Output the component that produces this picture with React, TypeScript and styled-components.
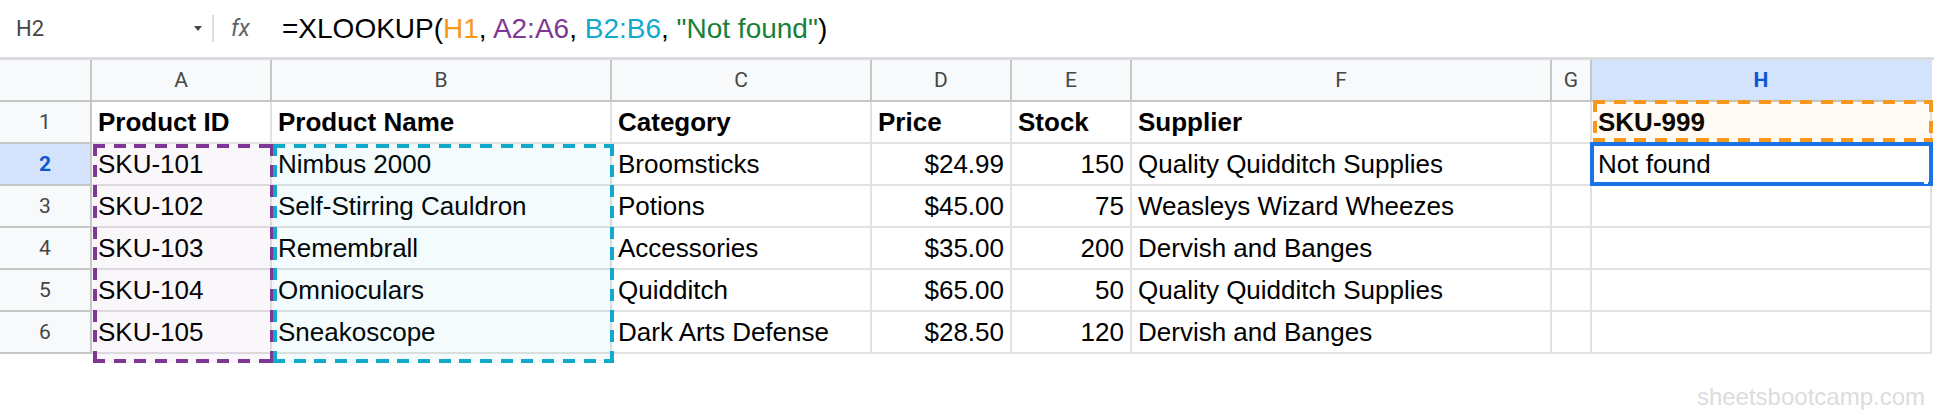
import { Fragment } from 'react';
import styled, { createGlobalStyle, css } from 'styled-components';

const GlobalStyle = createGlobalStyle`
  html, body {
    margin: 0;
    padding: 0;
    background: #fff;
  }

  body {
    font-family: 'Liberation Sans', Arial, sans-serif;
  }
`;

const COLUMN_WIDTHS = [180, 340, 260, 140, 120, 420, 40, 340];
const COLUMN_LETTERS = ['A', 'B', 'C', 'D', 'E', 'F', 'G', 'H'];
const ACTIVE_COLUMN = 'H';
const ACTIVE_ROW = 2;

type Row = { cells: string[]; bold?: boolean };

const rows: Row[] = [
  { cells: ['Product ID', 'Product Name', 'Category', 'Price', 'Stock', 'Supplier', '', 'SKU-999'], bold: true },
  { cells: ['SKU-101', 'Nimbus 2000', 'Broomsticks', '$24.99', '150', 'Quality Quidditch Supplies', '', 'Not found'] },
  { cells: ['SKU-102', 'Self-Stirring Cauldron', 'Potions', '$45.00', '75', 'Weasleys Wizard Wheezes', '', ''] },
  { cells: ['SKU-103', 'Remembrall', 'Accessories', '$35.00', '200', 'Dervish and Banges', '', ''] },
  { cells: ['SKU-104', 'Omnioculars', 'Quidditch', '$65.00', '50', 'Quality Quidditch Supplies', '', ''] },
  { cells: ['SKU-105', 'Sneakoscope', 'Dark Arts Defense', '$28.50', '120', 'Dervish and Banges', '', ''] },
];

const Page = styled.div`
  width: 1934px;
  background: #fff;
`;

/* formula bar */

const FormulaBar = styled.div`
  display: flex;
  align-items: center;
  height: 57px;
  border-bottom: 3px solid #dadce0;
`;

const NameBox = styled.div`
  display: flex;
  align-items: center;
  justify-content: space-between;
  box-sizing: border-box;
  width: 212px;
  padding: 0 10px 0 16px;
  font-family: Roboto, 'Liberation Sans', sans-serif;
  font-size: 22px;
  color: #444746;
`;

const Caret = styled.span`
  width: 0;
  height: 0;
  border-left: 4px solid transparent;
  border-right: 4px solid transparent;
  border-top: 5px solid #444746;
`;

const Divider = styled.span`
  width: 2px;
  height: 27px;
  background: #dadce0;
`;

const FxLabel = styled.span`
  box-sizing: border-box;
  width: 68px;
  padding-left: 17px;
  font-family: Roboto, 'Liberation Sans', sans-serif;
  font-style: italic;
  font-size: 23px;
  color: #5f6368;
`;

const Formula = styled.div`
  font-size: 28px;
  color: #000;
  white-space: pre;
`;

const Ref = styled.span<{ $color: string }>`
  color: ${({ $color }) => $color};
`;

/* grid */

const Sheet = styled.div`
  position: relative;
  display: grid;
  grid-template-columns: 92px ${COLUMN_WIDTHS.map((w) => `${w}px`).join(' ')};
  grid-auto-rows: 42px;
  width: 1932px;
`;

const headerBase = css`
  display: flex;
  align-items: center;
  justify-content: center;
  box-sizing: border-box;
  border-right: 2px solid #c4c7c5;
  border-bottom: 2px solid #c4c7c5;
  font-family: Roboto, 'Liberation Sans', sans-serif;
  font-size: 21px;
`;

const Corner = styled.div`
  ${headerBase};
  background: #f8f9fa;
`;

const ColumnHeader = styled.div<{ $active?: boolean }>`
  ${headerBase};
  border-right-color: ${({ $active }) => ($active ? '#d3e3fd' : '#c4c7c5')};
  background: ${({ $active }) => ($active ? '#d3e3fd' : '#f8f9fa')};
  color: ${({ $active }) => ($active ? '#0b57d0' : '#444746')};
  font-weight: ${({ $active }) => ($active ? 700 : 400)};
`;

const RowHeader = styled.div<{ $active?: boolean }>`
  ${headerBase};
  background: ${({ $active }) => ($active ? '#d3e3fd' : '#f8f9fa')};
  color: ${({ $active }) => ($active ? '#0b57d0' : '#444746')};
  font-weight: ${({ $active }) => ($active ? 700 : 400)};
`;

const Cell = styled.div<{ $right?: boolean; $bold?: boolean }>`
  display: flex;
  align-items: flex-end;
  justify-content: ${({ $right }) => ($right ? 'flex-end' : 'flex-start')};
  box-sizing: border-box;
  padding: 0 6px 4px;
  border-right: 2px solid #e1e1e1;
  border-bottom: 2px solid #e1e1e1;
  font-size: 26px;
  font-weight: ${({ $bold }) => ($bold ? 700 : 400)};
  color: #000;
  white-space: nowrap;
  overflow: hidden;
`;

/* range highlights drawn over the grid */

const dashes = (color: string) => `
  repeating-linear-gradient(90deg, ${color} 0 12px, transparent 12px 20.7px) left top / 100% 4px no-repeat,
  repeating-linear-gradient(90deg, ${color} 0 12px, transparent 12px 20.7px) left bottom / 100% 4px no-repeat,
  repeating-linear-gradient(180deg, ${color} 0 12px, transparent 12px 20.7px) left top / 4px 100% no-repeat,
  repeating-linear-gradient(180deg, ${color} 0 12px, transparent 12px 20.7px) right top / 4px 100% no-repeat
`;

type Box = { $left: number; $top: number; $width: number; $height: number };

const boxPlacement = css<Box>`
  position: absolute;
  left: ${({ $left }) => $left}px;
  top: ${({ $top }) => $top}px;
  width: ${({ $width }) => $width}px;
  height: ${({ $height }) => $height}px;
  box-sizing: border-box;
  pointer-events: none;
`;

const RangeBox = styled.div<Box & { $color: string; $fill: string }>`
  ${boxPlacement};
  background: ${({ $color }) => dashes($color)};
  background-color: ${({ $fill }) => $fill};
`;

const Selection = styled.div<Box>`
  ${boxPlacement};
  border: 4px solid #1a73e8;
`;

const FillHandle = styled.span`
  position: absolute;
  right: 1px;
  bottom: -2px;
  width: 4px;
  height: 4px;
  background: #fff;
`;

const Watermark = styled.div`
  display: flex;
  justify-content: flex-end;
  margin-top: 29px;
  padding-right: 9px;
  font-size: 24px;
  color: #dcdcdc;
`;

const ORANGE = '#f7981d';
const PURPLE = '#7e3794';
const CYAN = '#11a9cc';
const GREEN = '#188038';

export default function App() {
  return (
    <Page>
      <GlobalStyle />

      <FormulaBar>
        <NameBox>
          <span>H2</span>
          <Caret />
        </NameBox>
        <Divider />
        <FxLabel>fx</FxLabel>
        <Formula>
          =XLOOKUP(<Ref $color={ORANGE}>H1</Ref>, <Ref $color={PURPLE}>A2:A6</Ref>,{' '}
          <Ref $color={CYAN}>B2:B6</Ref>, <Ref $color={GREEN}>"Not found"</Ref>)
        </Formula>
      </FormulaBar>

      <Sheet>
        <Corner />
        {COLUMN_LETTERS.map((letter) => (
          <ColumnHeader key={letter} $active={letter === ACTIVE_COLUMN}>
            {letter}
          </ColumnHeader>
        ))}

        {rows.map((row, r) => (
          <Fragment key={r}>
            <RowHeader $active={r + 1 === ACTIVE_ROW}>{r + 1}</RowHeader>
            {row.cells.map((value, c) => (
              <Cell key={c} $bold={row.bold} $right={!row.bold && (c === 3 || c === 4)}>
                {value}
              </Cell>
            ))}
          </Fragment>
        ))}

        <RangeBox $left={93} $top={84} $width={181} $height={219} $color={PURPLE} $fill="rgba(126, 55, 148, 0.04)" />
        <RangeBox $left={273} $top={84} $width={341} $height={219} $color={CYAN} $fill="rgba(17, 169, 204, 0.05)" />
        <RangeBox $left={1593} $top={40} $width={340} $height={42} $color={ORANGE} $fill="rgba(247, 152, 29, 0.05)" />
        <Selection $left={1590} $top={82} $width={343} $height={44}>
          <FillHandle />
        </Selection>
      </Sheet>

      <Watermark>sheetsbootcamp.com</Watermark>
    </Page>
  );
}
